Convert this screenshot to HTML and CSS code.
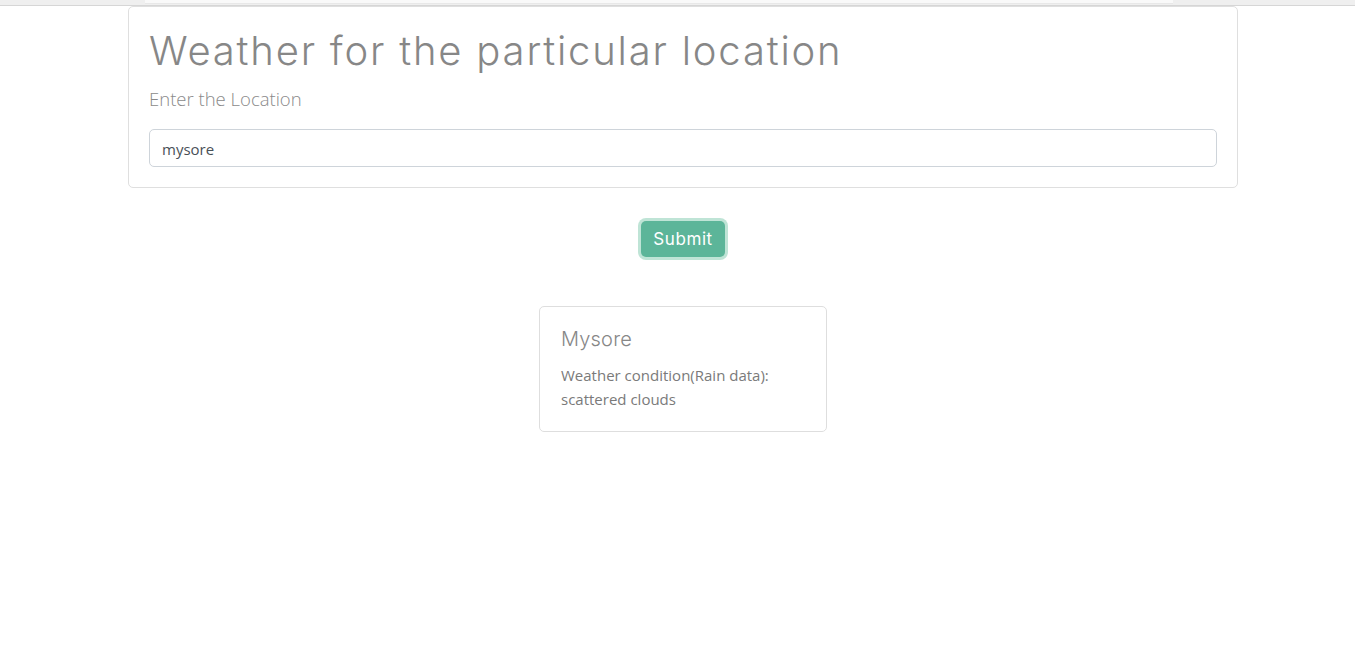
FILE: index.html
```html
<!DOCTYPE html>
<html>
<head>
<meta charset="utf-8">
<link rel="stylesheet" href="styles.css">
</head>
<body>
<div class="topbar"><div class="topbar-inner"></div></div>
<div class="page">
  <div class="card main-card">
    <h1 class="title">Weather for the particular location</h1>
    <p class="label">Enter the Location</p>
    <div class="input">mysore</div>
  </div>
  <div class="actions">
    <button class="btn">Submit</button>
  </div>
  <div class="result">
    <h3 class="city">Mysore</h3>
    <p class="desc">Weather condition(Rain data):<br>scattered clouds</p>
  </div>
</div>
</body>
</html>
```

FILE: styles.css
```css
html, body {
  margin: 0;
  padding: 0;
  background: #fff;
}
.topbar {
  height: 5px;
  background: #efefef;
  border-bottom: 1px solid #d6d6d6;
  padding: 0 182px 0 145px;
}
.topbar-inner {
  height: 3px;
  background: #f9f9f9;
  border-bottom: 1px solid #e8e8e8;
}
.page {
  width: 1110px;
  margin-left: 128px;
  display: flex;
  flex-direction: column;
  align-items: center;
}
.card {
  box-sizing: border-box;
  border: 1px solid #dfdfdf;
  border-radius: 5px;
  background: #fff;
}
.main-card {
  width: 100%;
  height: 182px;
  padding: 20px 20px 20px 20px;
}
.title {
  margin: 0;
  font-family: "Inter", sans-serif;
  font-weight: 300;
  font-size: 40px;
  line-height: 48px;
  letter-spacing: 1.8px;
  color: #878787;
}
.label {
  margin: 10px 0 0 0;
  font-family: "Open Sans", sans-serif;
  font-weight: 300;
  font-size: 18.5px;
  line-height: 28px;
  color: #8a8a8a;
}
.input {
  box-sizing: border-box;
  margin-top: 16px;
  height: 38px;
  border: 1px solid #ced4da;
  border-radius: 5px;
  padding: 1px 12px 0;
  font-family: "Open Sans", sans-serif;
  font-size: 15px;
  line-height: 36px;
  color: #495057;
}
.actions {
  margin-top: 33px;
  display: flex;
  justify-content: center;
}
.btn {
  box-sizing: border-box;
  width: 84px;
  height: 36px;
  border: none;
  border-radius: 5px;
  background: #5cb599;
  color: #fff;
  font-family: "Inter", sans-serif;
  font-weight: 400;
  font-size: 17px;
  line-height: 34px;
  letter-spacing: 0.6px;
  box-shadow: 0 0 0 3px #bfe4d6;
  padding: 0;
}
.result {
  box-sizing: border-box;
  margin-top: 49px;
  width: 288px;
  height: 126px;
  border: 1px solid #dedede;
  border-radius: 5px;
  padding: 20px 21px;
}
.city {
  margin: 0;
  font-family: "Inter", sans-serif;
  font-weight: 300;
  font-size: 20px;
  line-height: 24px;
  letter-spacing: 0.2px;
  color: #878787;
}
.desc {
  margin: 12px 0 0 0;
  font-family: "Open Sans", sans-serif;
  font-size: 15px;
  line-height: 24px;
  color: #7a7a7a;
}
```
